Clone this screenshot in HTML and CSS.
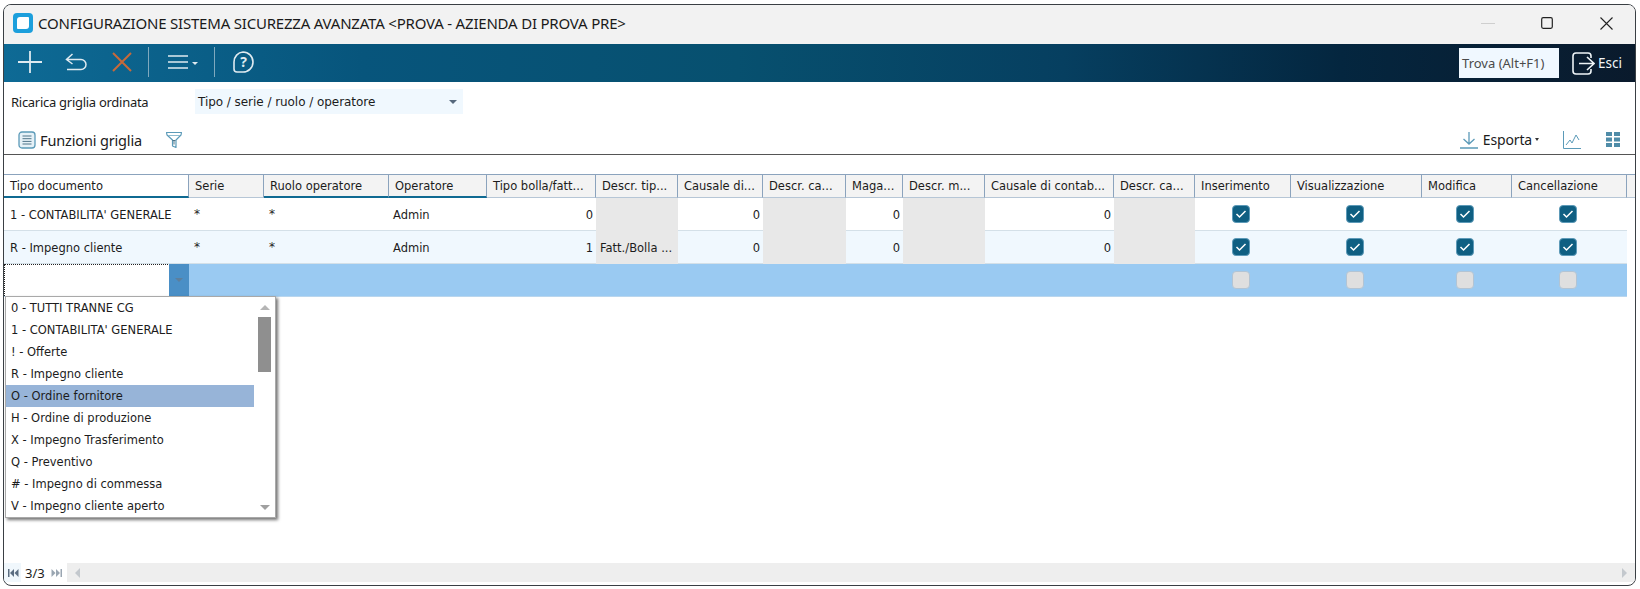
FILE: index.html
```html
<!DOCTYPE html>
<html lang="it">
<head>
<meta charset="utf-8">
<title>Configurazione sistema sicurezza avanzata</title>
<link rel="stylesheet" href="styles.css">
</head>
<body>
<div class="window">
  <header class="titlebar">
    <svg class="logo" width="20" height="20" viewBox="0 0 20 20"><rect width="20" height="20" rx="4" fill="#1c9fdc"/><path d="M7 4h8a1 1 0 0 1 1 1v8a3 3 0 0 1-3 3H5a1 1 0 0 1-1-1V7a3 3 0 0 1 3-3z" fill="#fff"/></svg>
    <span class="title">CONFIGURAZIONE SISTEMA SICUREZZA AVANZATA &lt;PROVA - AZIENDA DI PROVA PRE&gt;</span>
    <div class="winctrls">
      <svg width="14" height="12" viewBox="0 0 14 12"><path d="M0 6.500h14" stroke="#cfcfcf"/></svg>
      <svg width="12" height="12" viewBox="0 0 12 12"><rect x=".7" y=".7" width="10.600" height="10.600" rx="1.500" fill="none" stroke="#222" stroke-width="1.200"/></svg>
      <svg width="13" height="13" viewBox="0 0 13 13"><path d="M.5.5l12 12M12.500.5l-12 12" stroke="#222" stroke-width="1.100"/></svg>
    </div>
  </header>
  <nav class="mainbar">
    <svg class="ic ic-plus" width="24" height="22" viewBox="0 0 24 22"><path d="M12 0v22M0 11h24" stroke="#dfeaf0" stroke-width="1.800"/></svg>
    <svg class="ic ic-undo" width="22" height="18" viewBox="0 0 22 18"><path d="M7.500 1L1.500 6.500 7.500 11M2 6.500h14a5 5 0 0 1 0 10H2" fill="none" stroke="#dfeaf0" stroke-width="1.500"/></svg>
    <svg class="ic ic-close" width="20" height="20" viewBox="0 0 20 20"><path d="M1 1l18 18M19 1L1 19" stroke="#c8693a" stroke-width="2"/></svg>
    <span class="vsep sep-a"></span>
    <svg class="ic ic-menu" width="20" height="14" viewBox="0 0 20 14"><path d="M0 1h20M0 7h20M0 13h20" stroke="#dfeaf0" stroke-width="1.600"/></svg>
    <span class="caret caret-light"></span>
    <span class="vsep sep-b"></span>
    <svg class="ic ic-help" width="24" height="22" viewBox="0 0 24 22"><path d="M12 1a10 10 0 0 1 10 10 10 10 0 0 1-10 10H6a3 3 0 0 1-3-3v-7A9.500 10 0 0 1 12 1z" fill="none" stroke="#dfeaf0" stroke-width="1.600"/><text x="12.500" y="16" text-anchor="middle" class="help-q">?</text></svg>
    <span class="spacer"></span>
    <div class="findbox">Trova (Alt+F1)</div>
    <svg class="ic-exit" width="23" height="23" viewBox="0 0 23 23"><path d="M19 6V4a3 3 0 0 0-3-3H4a3 3 0 0 0-3 3v15a3 3 0 0 0 3 3h12a3 3 0 0 0 3-3v-2" fill="none" stroke="#eef4f7" stroke-width="1.600"/><path d="M7 11.500h15M15 5l7 6.500-7 6.500" fill="none" stroke="#eef4f7" stroke-width="1.600"/></svg>
    <span class="exit-label">Esci</span>
  </nav>
  <div class="formrow">
    <label class="formlabel">Ricarica griglia ordinata</label>
    <div class="combo"><span>Tipo / serie / ruolo / operatore</span><span class="caret caret-dark"></span></div>
  </div>
  <div class="gridtools">
    <svg width="18" height="18" viewBox="0 0 18 18"><rect x="1" y="1" width="16" height="16" rx="3" fill="#e6f1f7" stroke="#5b9ab8" stroke-width="1.300"/><path d="M4.500 5h9M4.500 7.700h9M4.500 10.400h9M4.500 13h9" stroke="#4f7488"/></svg>
    <span class="tool-label">Funzioni griglia</span>
    <svg class="ic-filter" width="18" height="18" viewBox="0 0 18 18"><path d="M1.500 1.500h15l-.5 2.500-5 5v7.500l-3.500-1.500v-6L2 4z" fill="none" stroke="#5b9ab8" stroke-width="1.200" stroke-linejoin="round"/><path d="M3 4.500h12" stroke="#8fbcd0"/><path d="M7.500 9.500h3M9 9.500v4" stroke="#4f7488"/></svg>
    <span class="spacer"></span>
    <svg width="18" height="18" viewBox="0 0 18 18"><path d="M9 1v12M3.500 8L9 13l5.500-5M0 17h18" fill="none" stroke="#5b9ab8" stroke-width="1.300"/></svg>
    <span class="tool-label export">Esporta</span>
    <span class="caret caret-small"></span>
    <svg class="ic-chart" width="18" height="18" viewBox="0 0 18 18"><path d="M.5 0v17.500H18" fill="none" stroke="#5b9ab8"/><path d="M3 14l4-5 2 3 4-8 3 5" fill="none" stroke="#5b9ab8"/></svg>
    <svg class="ic-tiles" width="14" height="15" viewBox="0 0 14 15"><path d="M0 0h6v4H0zM8 0h6v4H8zM0 5.500h6v4H0zM8 5.500h6v4H8zM0 11h6v4H0zM8 11h6v4H8z" fill="#4f8ca8"/></svg>
  </div>
  <section class="gridarea">
    <div class="grow ghead">
      <div class="hc hc-active">Tipo documento</div>
      <div class="hc">Serie</div>
      <div class="hc hc-sort">Ruolo operatore</div>
      <div class="hc hc-sort">Operatore</div>
      <div class="hc">Tipo bolla/fatt...</div>
      <div class="hc">Descr. tip...</div>
      <div class="hc">Causale di...</div>
      <div class="hc">Descr. ca...</div>
      <div class="hc">Maga...</div>
      <div class="hc">Descr. m...</div>
      <div class="hc">Causale di contab...</div>
      <div class="hc">Descr. ca...</div>
      <div class="hc">Inserimento</div>
      <div class="hc">Visualizzazione</div>
      <div class="hc">Modifica</div>
      <div class="hc">Cancellazione</div>
      <div class="hc hc-fill"></div>
    </div>
    <div class="grow drow">
      <div class="c">1 - CONTABILITA' GENERALE</div>
      <div class="c star">*</div>
      <div class="c star">*</div>
      <div class="c tight">Admin</div>
      <div class="c num">0</div>
      <div class="c ro"></div>
      <div class="c num">0</div>
      <div class="c ro"></div>
      <div class="c num">0</div>
      <div class="c ro"></div>
      <div class="c num">0</div>
      <div class="c ro"></div>
      <div class="c chk"><span class="cb"><svg width="12" height="10" viewBox="0 0 12 10"><path d="M1.500 5l3 3 6-6" fill="none" stroke="#fff" stroke-width="1.500"/></svg></span></div>
      <div class="c chk"><span class="cb"><svg width="12" height="10" viewBox="0 0 12 10"><path d="M1.500 5l3 3 6-6" fill="none" stroke="#fff" stroke-width="1.500"/></svg></span></div>
      <div class="c chk"><span class="cb"><svg width="12" height="10" viewBox="0 0 12 10"><path d="M1.500 5l3 3 6-6" fill="none" stroke="#fff" stroke-width="1.500"/></svg></span></div>
      <div class="c chk"><span class="cb"><svg width="12" height="10" viewBox="0 0 12 10"><path d="M1.500 5l3 3 6-6" fill="none" stroke="#fff" stroke-width="1.500"/></svg></span></div>
      <div class="c-fill"></div>
    </div>
    <div class="grow drow alt">
      <div class="c">R - Impegno cliente</div>
      <div class="c star">*</div>
      <div class="c star">*</div>
      <div class="c tight">Admin</div>
      <div class="c num">1</div>
      <div class="c ro tight">Fatt./Bolla ...</div>
      <div class="c num">0</div>
      <div class="c ro"></div>
      <div class="c num">0</div>
      <div class="c ro"></div>
      <div class="c num">0</div>
      <div class="c ro"></div>
      <div class="c chk"><span class="cb"><svg width="12" height="10" viewBox="0 0 12 10"><path d="M1.500 5l3 3 6-6" fill="none" stroke="#fff" stroke-width="1.500"/></svg></span></div>
      <div class="c chk"><span class="cb"><svg width="12" height="10" viewBox="0 0 12 10"><path d="M1.500 5l3 3 6-6" fill="none" stroke="#fff" stroke-width="1.500"/></svg></span></div>
      <div class="c chk"><span class="cb"><svg width="12" height="10" viewBox="0 0 12 10"><path d="M1.500 5l3 3 6-6" fill="none" stroke="#fff" stroke-width="1.500"/></svg></span></div>
      <div class="c chk"><span class="cb"><svg width="12" height="10" viewBox="0 0 12 10"><path d="M1.500 5l3 3 6-6" fill="none" stroke="#fff" stroke-width="1.500"/></svg></span></div>
      <div class="c-fill"></div>
    </div>
    <div class="grow drow sel">
      <div class="c editor"><div class="edit-input"></div><div class="edit-btn"><span class="caret caret-btn"></span></div></div>
      <div class="c"></div><div class="c"></div><div class="c"></div><div class="c"></div><div class="c"></div><div class="c"></div><div class="c"></div><div class="c"></div><div class="c"></div><div class="c"></div><div class="c"></div>
      <div class="c chk"><span class="cb off"></span></div>
      <div class="c chk"><span class="cb off"></span></div>
      <div class="c chk"><span class="cb off"></span></div>
      <div class="c chk"><span class="cb off"></span></div>
      <div class="c-fill"></div>
    </div>
    <div class="dropdown">
      <ul class="dd-list">
        <li>0 - TUTTI TRANNE CG</li>
        <li>1 - CONTABILITA' GENERALE</li>
        <li>! - Offerte</li>
        <li>R - Impegno cliente</li>
        <li class="hot">O - Ordine fornitore</li>
        <li>H - Ordine di produzione</li>
        <li>X - Impegno Trasferimento</li>
        <li>Q - Preventivo</li>
        <li># - Impegno di commessa</li>
        <li>V - Impegno cliente aperto</li>
      </ul>
      <div class="dd-scroll">
        <span class="tri tri-up"></span>
        <span class="thumb"></span>
        <span class="spacer"></span>
        <span class="tri tri-down"></span>
      </div>
    </div>
  </section>
  <footer class="statusbar">
    <div class="pager">
      <svg width="12" height="8" viewBox="0 0 12 8"><path d="M1 0h1.500v8H1zM7 0v8L3 4zM11.500 0v8l-4-4z" fill="#5a6c80"/></svg>
      <span class="pageno">3/3</span>
      <svg width="12" height="8" viewBox="0 0 12 8"><path d="M11 0H9.500v8H11zM5 0v8l4-4zM.5 0v8l4-4z" fill="#9aa6b2"/></svg>
    </div>
    <div class="hscroll">
      <span class="tri tri-left"></span>
      <span class="tri tri-right"></span>
    </div>
  </footer>
</div>
</body>
</html>
```
FILE: styles.css
```css
* { box-sizing: border-box; }
html, body { margin: 0; height: 100%; background: #fff; overflow: hidden; }
body { padding: 4px 4px 3px 3px; }
.window {
  position: relative;
  height: 582px;
  display: flex;
  flex-direction: column;
  border: 1px solid #3a3f44;
  border-radius: 8px;
  overflow: hidden;
  background: #fff;
  font-family: "DejaVu Sans", sans-serif;
  font-size: 11.500px;
  color: #1c1c1c;
}
.spacer { flex: 1; }

.titlebar {
  height: 39px;
  flex: none;
  background: #f2f2f2;
  display: flex;
  align-items: center;
  padding: 0 0 3px 9px;
}
.title {
  margin-left: 5px;
  font-family: "Noto Sans", sans-serif;
  font-size: 15px;
  letter-spacing: -.2px;
  color: #1a1a1a;
}
.winctrls { margin-left: auto; display: flex; align-items: center; padding-right: 22px; }
.winctrls svg:nth-child(1) { margin-right: 46px; }
.winctrls svg:nth-child(2) { margin-right: 47px; }

.mainbar {
  height: 38px;
  flex: none;
  display: flex;
  align-items: center;
  background: linear-gradient(90deg, #0e6a95 0%, #07557c 22%, #07506f 45%, #063f60 65%, #04263f 82%, #0a1a2c 100%);
}
.ic { margin-bottom: 2px; }
.ic-plus { margin-left: 14px; }
.ic-undo { margin-left: 23px; }
.ic-close { margin-left: 25px; }
.vsep { width: 1px; height: 30px; background: #7fa9be; margin-bottom: 2px; }
.sep-a { margin-left: 16px; }
.ic-menu { margin-left: 19px; }
.sep-b { margin-left: 16px; }
.ic-help { margin-left: 16px; }
.help-q { font: 700 14px "Noto Sans", sans-serif; fill: #dfeaf0; }
.findbox {
  width: 100px;
  height: 30px;
  background: #f0f8ff;
  color: #4a4a4a;
  font-family: "Noto Sans", sans-serif;
  font-size: 13px;
  line-height: 30px;
  padding-left: 3px;
}
.ic-exit { margin-left: 13px; }
.exit-label {
  margin-left: 3px;
  margin-right: 13px;
  color: #f2f6f8;
  font-family: "Noto Sans", sans-serif;
  font-size: 13.500px;
}

.caret { display: inline-block; width: 0; height: 0; border-style: solid; border-color: transparent; }
.caret-light { border-width: 3px 3px 0; border-top-color: #dfeaf0; margin-left: 4px; }
.caret-dark { border-width: 4px 4px 0; border-top-color: #56687c; margin-left: auto; margin-right: 6px; }
.caret-small { border-width: 3px 2.500px 0; border-top-color: #333; margin-left: 3px; }
.caret-btn { border-width: 4px 4px 0; border-top-color: #5d7f9c; }

.formrow {
  height: 40px;
  flex: none;
  display: flex;
  align-items: center;
  padding: 0 0 0 7px;
}
.formlabel {
  width: 184px;
  font-family: "Noto Sans", sans-serif;
  font-size: 13px;
  letter-spacing: -.28px;
}
.combo {
  width: 268px;
  height: 25px;
  margin-top: -1px;
  background: #f0f8fe;
  display: flex;
  align-items: center;
  padding-left: 3px;
  font-size: 12px;
  letter-spacing: -.05px;
}

.gridtools {
  height: 33px;
  flex: none;
  display: flex;
  align-items: center;
  padding: 3px 15px 0 14px;
  border-bottom: 1px solid #555;
}
.tool-label {
  margin-left: 4px;
  font-family: "Noto Sans", sans-serif;
  font-size: 14.500px;
  letter-spacing: -.15px;
}
.ic-filter { margin-left: 23px; }
.tool-label.export { margin-left: 5px; font-size: 14px; }
.ic-chart { margin-left: 24px; }
.ic-tiles { margin-left: 25px; }

.gridarea {
  position: relative;
  flex: 1;
  padding-top: 19px;
  min-height: 0;
}
.grow {
  display: grid;
  grid-template-columns: 185px 75px 125px 98px 109px 82px 85px 83px 57px 82px 129px 81px 96px 131px 90px 115px 1fr;
}
.ghead { height: 24px; border-top: 1px solid #8ba3bd; }
.hc {
  background: #f3f3f3;
  border-right: 1px solid #8ba3bd;
  border-bottom: 1px solid #b6c6d6;
  line-height: 23px;
  padding-left: 6px;
  white-space: nowrap;
  overflow: hidden;
}
.hc-active { background: #fff; border-bottom: 2px solid #0f6a92; }
.hc-sort { border-bottom: 2px solid #0f6a92; }
.hc-fill { border-right: 0; }

.drow { height: 33px; }
.c {
  display: flex;
  align-items: center;
  padding-left: 6px;
  padding-top: 2px;
  border-bottom: 1px solid #d4e0e8;
  white-space: nowrap;
  overflow: hidden;
}
.c-fill { background: #fff; }
.alt .c { background: #f0f8fe; }
.c.tight { padding-left: 4px; }
.c.star { align-items: flex-start; padding: 9px 0 0 5px; font-size: 12px; }
.c.num { justify-content: flex-end; padding: 2px 3px 0 0; }
.c.ro, .alt .c.ro { background: #e8e8e8; border-bottom-color: #e8e8e8; }
.c.chk { justify-content: center; padding: 0 4px 1px 0; }
.sel .c { background: #9acaf2; border-bottom-color: #b9d6ee; }
.cb {
  width: 18px;
  height: 18px;
  display: flex;
  align-items: center;
  justify-content: center;
  background: #0f5f82;
  border: 1px solid #5d9ab8;
  border-radius: 4px;
}
.cb.off { background: #dfdfdf; border: 1px solid #b2c4d4; }
.sel .c.editor {
  background: #fff;
  padding: 0;
  display: flex;
  align-items: stretch;
}
.edit-input { flex: 1; border: 1px dotted #222; border-right: 0; border-bottom: 0; }
.edit-btn {
  width: 21px;
  background: #4a8fc6;
  border-left: 1px solid #fff;
  display: flex;
  align-items: center;
  justify-content: center;
}

.dropdown {
  position: absolute;
  left: 1px;
  top: 141px;
  width: 271px;
  height: 222px;
  display: flex;
  background: #fff;
  border: 1px solid #a9a9a9;
  box-shadow: 2px 2px 3px rgba(0,0,0,.55);
  z-index: 5;
}
.dd-list { list-style: none; margin: 0; padding: 0; flex: 1; }
.dd-list li { height: 22px; line-height: 23px; padding-left: 5px; white-space: nowrap; }
.dd-list li.hot { background: #97b4d8; }
.dd-scroll {
  width: 21px;
  display: flex;
  flex-direction: column;
  align-items: center;
  padding: 8px 0 7px;
  background: #fff;
}
.thumb { width: 13px; height: 55px; margin-top: 7px; background: #8f8f8f; }
.tri { display: inline-block; width: 0; height: 0; border-style: solid; border-color: transparent; }
.tri-up { border-width: 0 5px 5px; border-bottom-color: #b5b5b5; }
.tri-down { border-width: 5px 5px 0; border-top-color: #a0a0a0; }
.tri-left { border-width: 5px 5px 5px 0; border-right-color: #c3c8cd; }
.tri-right { border-width: 5px 0 5px 5px; border-left-color: #c3c8cd; }

.statusbar {
  height: 19px;
  flex: none;
  display: flex;
  margin-bottom: 3px;
}
.pager {
  width: 63px;
  display: flex;
  align-items: center;
  padding-left: 3px;
  background: linear-gradient(90deg, #f0f7fc 0, #f0f7fc 17px, #fff 17px);
}
.pageno { margin: 0 6px 0 6px; font-family: "Noto Sans", sans-serif; font-size: 13px; }
.hscroll {
  flex: 1;
  display: flex;
  align-items: center;
  justify-content: space-between;
  padding: 0 8px 0 8px;
  background: #eeeeee;
}
```
